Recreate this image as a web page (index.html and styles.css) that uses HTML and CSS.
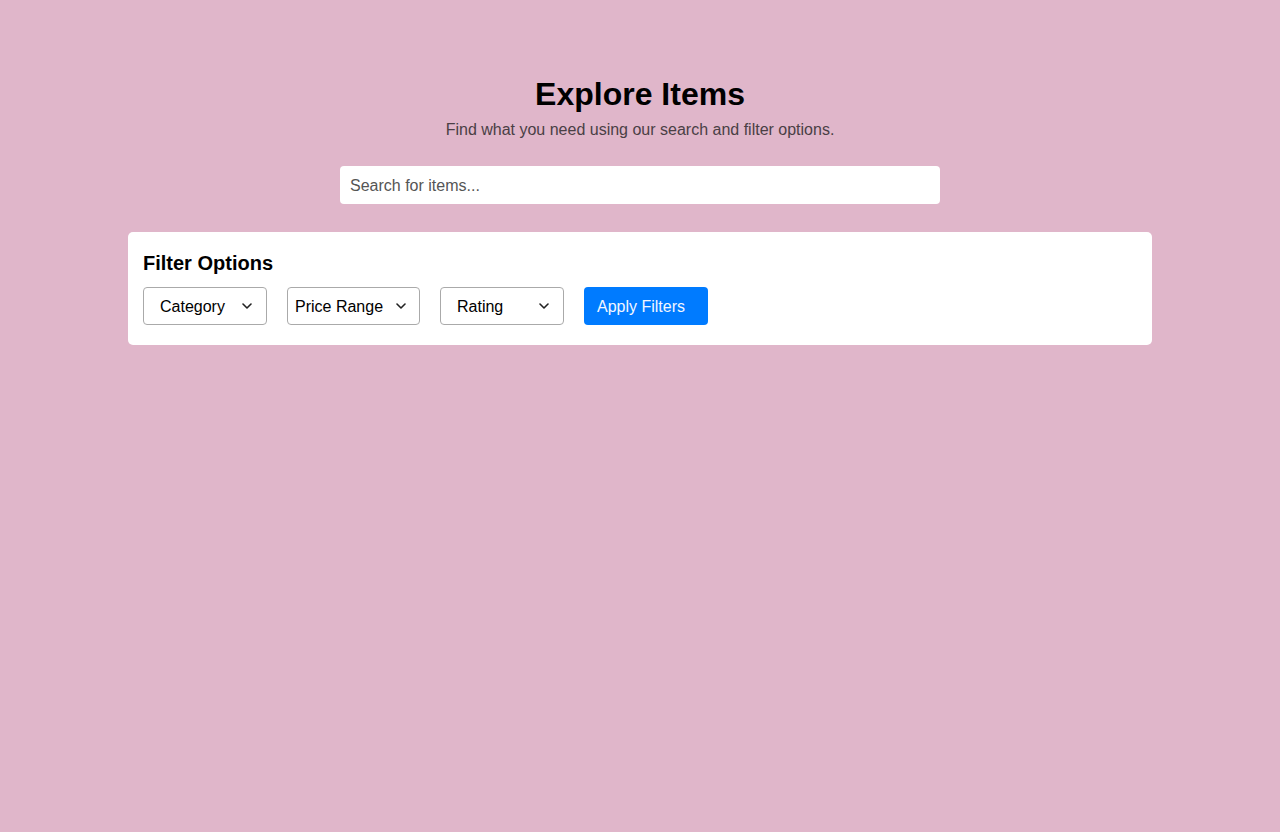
FILE: index.html
```html
<!DOCTYPE html>
<html lang="en">
<head>
<meta charset="utf-8">
<title>Explore Items</title>
<link rel="stylesheet" href="styles.css">
</head>
<body>
<main class="page">
  <header class="hero">
    <h1 class="title">Explore Items</h1>
    <p class="subtitle">Find what you need using our search and filter options.</p>
  </header>
  <div class="search-wrap">
    <input class="search" type="text" placeholder="Search for items...">
  </div>
  <section class="card">
    <h2 class="card-title">Filter Options</h2>
    <div class="filters">
      <label class="select select-category">
        <select><option>Category</option></select>
        <svg class="chev" viewBox="0 0 10 6" width="10" height="6"><path d="M1 1l4 4 4-4" fill="none" stroke="#222" stroke-width="1.6" stroke-linecap="round" stroke-linejoin="round"/></svg>
      </label>
      <label class="select select-price">
        <select><option>Price Range</option></select>
        <svg class="chev" viewBox="0 0 10 6" width="10" height="6"><path d="M1 1l4 4 4-4" fill="none" stroke="#222" stroke-width="1.6" stroke-linecap="round" stroke-linejoin="round"/></svg>
      </label>
      <label class="select select-rating">
        <select><option>Rating</option></select>
        <svg class="chev" viewBox="0 0 10 6" width="10" height="6"><path d="M1 1l4 4 4-4" fill="none" stroke="#222" stroke-width="1.6" stroke-linecap="round" stroke-linejoin="round"/></svg>
      </label>
      <button class="apply" type="button">Apply Filters</button>
    </div>
  </section>
</main>
</body>
</html>
```

FILE: styles.css
```css
* { box-sizing: border-box; }
html, body { margin: 0; padding: 0; }
body {
  background: #e0b6ca;
  font-family: "Liberation Sans", Arial, sans-serif;
  color: #000;
  min-height: 832px;
}
.page {
  max-width: 1024px;
  margin: 0 auto;
  padding: 76px 0 40px;
}
.hero { text-align: center; }
.title {
  margin: 0;
  font-size: 32px;
  line-height: 37px;
  font-weight: 700;
}
.subtitle {
  margin: 8px 0 0;
  font-size: 16px;
  line-height: 18px;
  color: #4a3f45;
}
.search-wrap {
  display: flex;
  justify-content: center;
  margin-top: 27px;
}
.search {
  width: 600px;
  height: 38px;
  border: none;
  border-radius: 4px;
  background: #fff;
  padding: 1px 10px 0;
  font-family: "Liberation Sans", Arial, sans-serif;
  font-size: 16px;
  color: #333;
  outline: none;
}
.search::placeholder { color: #555; }
.card {
  margin-top: 28px;
  background: #fff;
  border-radius: 5px;
  padding: 20px 15px;
}
.card-title {
  margin: 0 0 12px;
  font-size: 20px;
  line-height: 23px;
  font-weight: 700;
}
.filters {
  display: flex;
  gap: 20px;
  align-items: center;
}
.select {
  position: relative;
  display: block;
  width: 124px;
  height: 38px;
}
.select-price { width: 133px; }
.select select {
  appearance: none;
  -webkit-appearance: none;
  width: 100%;
  height: 100%;
  border: 1px solid #aaa;
  border-radius: 4px;
  background: #fff;
  font-family: "Liberation Sans", Arial, sans-serif;
  font-size: 16px;
  color: #000;
  padding: 0 20px 0 7px;
  outline: none;
}
.select-category select { padding-left: 16px; }
.select-price select { padding-left: 7px; }
.select-rating select { padding-left: 16px; }
.chev {
  position: absolute;
  right: 15px;
  top: 16px;
  pointer-events: none;
}
.select-price .chev { right: 14px; }
.apply {
  width: 124px;
  height: 38px;
  border: none;
  border-radius: 4px;
  background: #007bff;
  color: #f2f6ff;
  font-family: "Liberation Sans", Arial, sans-serif;
  font-size: 16px;
  text-align: left;
  padding: 2px 13px 0;
}
```
